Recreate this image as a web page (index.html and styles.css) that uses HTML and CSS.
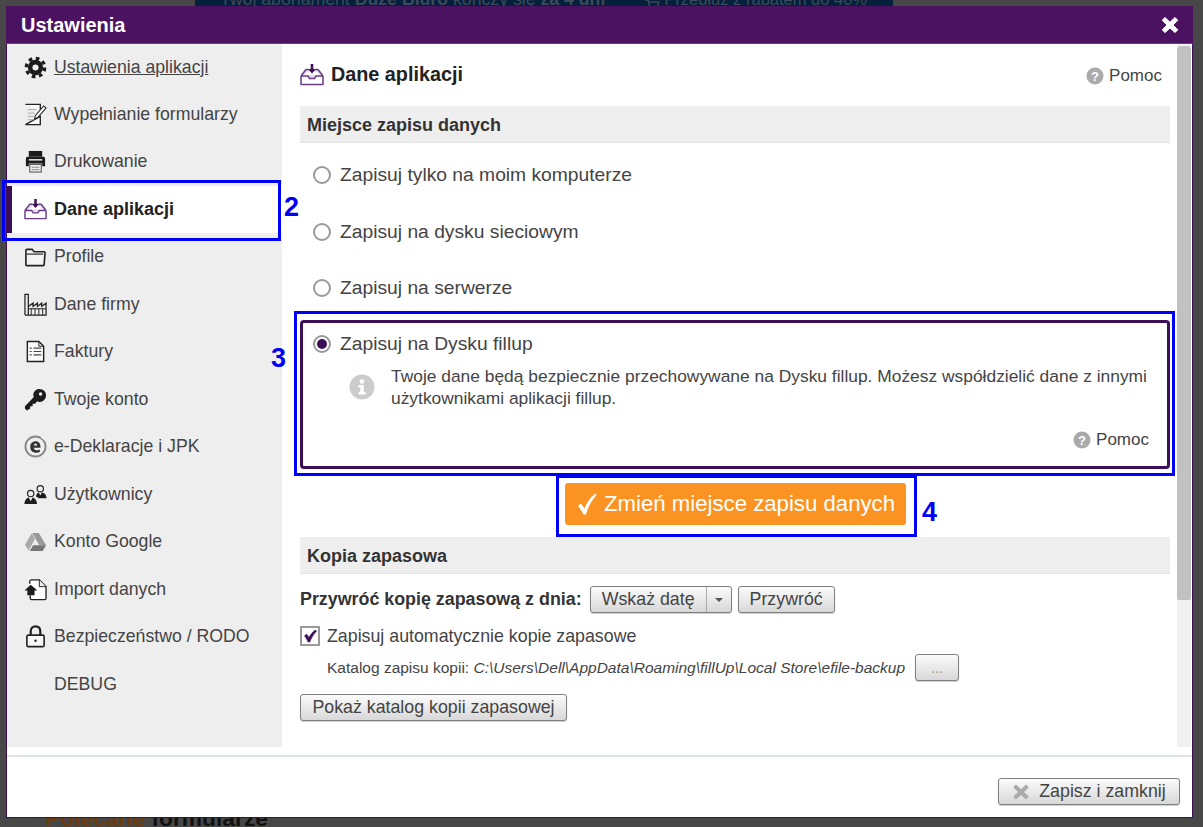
FILE: index.html
```html
<!DOCTYPE html>
<html lang="pl">
<head>
<meta charset="utf-8">
<title>Ustawienia</title>
<link rel="stylesheet" href="styles.css">
</head>
<body>
<div class="page">
  <div class="peek-top"><span>Twój abonament <strong>Duże Biuro</strong> kończy się <strong>za 4 dni</strong></span><svg class="peek-cart" viewBox="0 0 16 16"><path d="M1 2H4L6 10H13L15 4H5" fill="none" stroke="#3c4a5a" stroke-width="1.500"/><circle cx="7" cy="13" r="1.500" fill="#3c4a5a"/><circle cx="12" cy="13" r="1.500" fill="#3c4a5a"/></svg><span class="peek-link">Przedłuż z rabatem do 40%</span></div>
  <div class="peek-bottom"><span class="peek-orange">Polecane</span> formularze</div>

  <div class="dialog">
    <header class="titlebar">
      <h1 class="title">Ustawienia</h1>
      <svg class="close" viewBox="0 0 18 18"><path d="M4 1.5 9 6.2 14 1.5 16.8 4.3 12 9 16.8 13.8 14 16.6 9 11.9 4 16.6 1.2 13.8 6 9 1.2 4.3Z" fill="#fff" stroke="#fff" stroke-linejoin="round"/></svg>
    </header>

    <div class="main">
      <nav class="sidebar">
        <a class="nav-item first">
          <svg class="ico" viewBox="0 0 24 24"><circle cx="12" cy="12" r="8" fill="#1c1c1c"/><circle cx="12" cy="12" r="9.6" fill="none" stroke="#1c1c1c" stroke-width="3.4" stroke-dasharray="3.8 3.74"/><circle cx="12" cy="12" r="3.2" fill="#eee"/></svg>
          <span class="underlined">Ustawienia aplikacji</span>
        </a>
        <a class="nav-item">
          <svg class="ico" viewBox="0 0 24 24"><path d="M1.500 1.500H17V7M17 14V22.500H1.500Z" fill="#fff" stroke="#222" stroke-width="1.400"/><path d="M4 7H13M4 10.500H11M4 14H10M4 17.500H11" stroke="#aaa" stroke-width="1"/><path d="M11 16.500 12 13 20.500 3 23 5.200 14.500 15Z" fill="#fff" stroke="#222" stroke-width="1.100"/></svg>
          <span>Wypełnianie formularzy</span>
        </a>
        <a class="nav-item">
          <svg class="ico" viewBox="0 0 24 24"><path d="M5 1H19V7H5Z" fill="#1c1c1c"/><path d="M2 9C2 7.500 3 7 4 7H20C21 7 22 7.500 22 9V17H19V14H5V17H2Z" fill="#1c1c1c"/><rect x="6" y="15" width="12" height="8" fill="#eee" stroke="#444"/><path d="M8 18H16M8 20.500H16" stroke="#888"/><rect x="5" y="9.500" width="14" height="1.500" fill="#eee"/></svg>
          <span>Drukowanie</span>
        </a>
        <a class="nav-item active">
          <svg class="ico" viewBox="0 0 24 24"><path d="M1 12 6 6H9V9H7L4 12.500H8.500L10 15H14L15.500 12.500H20L17 9H15V6H18L23 12Z" fill="#e4d8ea"/><path d="M1 13V21.500H23V13M1 13 6 6.500H8.500M23 13 18 6.500H15.500M1 13H8L9.500 15.500H14.500L16 13H23" fill="none" stroke="#6a3d85" stroke-width="1.500" stroke-linejoin="round"/><path d="M10.700 1H13.300V6H16L12 10.500 8 6H10.700Z" fill="#3c0f56"/></svg>
          <span>Dane aplikacji</span>
        </a>
        <a class="nav-item">
          <svg class="ico" viewBox="0 0 24 24"><path d="M2 20.500V5.500C2 4.800 2.400 4.500 3 4.500H8.500L10.500 7H21C21.700 7 22 7.400 22 8L21 20.500C21 21.200 20.600 21.500 20 21.500H3C2.400 21.500 2 21.200 2 20.500Z" fill="#f4f4f4" stroke="#222" stroke-width="1.700"/><path d="M3 9.500H20" stroke="#222" stroke-width="1.200"/></svg>
          <span>Profile</span>
        </a>
        <a class="nav-item">
          <svg class="ico" viewBox="0 0 24 24"><path d="M1 23V1.500H4.500V23M4.500 14 9.500 10.500V14L14 10.500V14L18.500 10.500V14L23 10.500V23H1" fill="none" stroke="#222" stroke-width="1.300"/><path d="M7.500 16V23M11.500 16V23M15.500 16V23M19.500 16V23M5 16.500H23" stroke="#222" stroke-width="1"/></svg>
          <span>Dane firmy</span>
        </a>
        <a class="nav-item">
          <svg class="ico" viewBox="0 0 24 24"><path d="M3.500 1.500H15.500L20.500 6.500V22.500H3.500Z" fill="#fafafa" stroke="#222" stroke-width="1.500"/><path d="M15.500 1.500V6.500H20.500" fill="none" stroke="#222"/><path d="M6 8.500H8M6 12H8M6 15.500H8M10 8.500H18M10 12H18M10 15.500H18" stroke="#444" stroke-width="1.300"/></svg>
          <span>Faktury</span>
        </a>
        <a class="nav-item">
          <svg class="ico" viewBox="0 0 24 24"><path d="M16 1C20 1 23 4 23 7.500 23 11.500 20 14.500 16.500 14.500 15.300 14.500 14.500 14.200 13.800 13.900L11.500 16.500H9V19H6.500V21.500L3 23.500 1 21.500V19L10.300 9.500C10 8.800 9.700 8 9.700 7.200 9.700 3.800 12.500 1 16 1Z" fill="#1c1c1c"/><circle cx="17.300" cy="6.300" r="1.800" fill="#eee"/></svg>
          <span>Twoje konto</span>
        </a>
        <a class="nav-item">
          <svg class="ico" viewBox="0 0 24 24"><circle cx="12" cy="12" r="10.500" fill="none" stroke="#888" stroke-width="2"/><path d="M17 2H23V7" fill="#eee"/><path d="M6.500 12.500C6.500 8.800 9 6.500 12.200 6.500 15.500 6.500 17.500 9 17.200 13.200H10.200C10.500 15.300 12 16 13.500 16 14.800 16 15.700 15.700 16.500 15.200V17.700C15.500 18.300 14.300 18.500 13 18.500 9.200 18.500 6.500 16.300 6.500 12.500ZM10.200 11H13.800C13.700 9.600 13.100 8.900 12.100 8.900 11 8.900 10.400 9.700 10.200 11Z" fill="#333" fill-rule="evenodd"/></svg>
          <span>e-Deklaracje i JPK</span>
        </a>
        <a class="nav-item">
          <svg class="ico" viewBox="0 0 24 24"><circle cx="7" cy="11" r="3.300" fill="#eee" stroke="#222" stroke-width="1.200"/><path d="M0.500 22C0.500 17.500 3 15.500 5 15L7 19 9 15C11 15.500 13.500 17.500 13.500 22Z" fill="#1c1c1c"/><circle cx="17" cy="6" r="3.300" fill="#eee" stroke="#222" stroke-width="1.200"/><path d="M12.500 14C13 11.500 14 10.500 15.300 10L17 13 18.700 10C21 10.500 23.300 12 23.500 16H15.500C14.500 15 13.500 14.500 12.500 14Z" fill="#1c1c1c"/></svg>
          <span>Użytkownicy</span>
        </a>
        <a class="nav-item">
          <svg class="ico" viewBox="0 0 24 24"><path d="M8.500 3H15.500L23 16H16Z" fill="#999"/><path d="M8 3.500 11.500 9.500 4.800 21.500 1 15.500Z" fill="#aaa"/><path d="M9.500 16H23L19.500 22H6Z" fill="#777"/></svg>
          <span>Konto Google</span>
        </a>
        <a class="nav-item">
          <svg class="ico" viewBox="0 0 24 24"><path d="M6 6V4C6 3 6.500 2 7.500 2H16L23 9V21C23 22 22.500 22.500 21.500 22.500H8C7 22.500 6.500 22 6.500 21V18" fill="#fff" stroke="#222" stroke-width="1.400"/><path d="M16 2V9H23" fill="#eee" stroke="#222"/><path d="M7 7 14 13H11V18H3.500V13H0.500Z" fill="#1c1c1c"/></svg>
          <span>Import danych</span>
        </a>
        <a class="nav-item">
          <svg class="ico" viewBox="0 0 24 24"><path d="M7 11V7C7 3.500 9 1.500 12 1.500 15 1.500 17 3.500 17 7V11" fill="none" stroke="#222" stroke-width="2.300"/><rect x="3" y="10.500" width="18" height="12" rx="1.500" fill="#f7f7f7" stroke="#222" stroke-width="1.700"/><circle cx="12" cy="16.500" r="1.300" fill="#222"/></svg>
          <span>Bezpieczeństwo / RODO</span>
        </a>
        <a class="nav-item"><span class="ico"></span><span>DEBUG</span></a>
      </nav>

      <section class="content">
        <div class="heading-row">
          <svg class="heading-ico" viewBox="0 0 24 24"><path d="M1 12 6 6H9V9H7L4 12.500H8.500L10 15H14L15.500 12.500H20L17 9H15V6H18L23 12Z" fill="#e4d8ea"/><path d="M1 13V21.500H23V13M1 13 6 6.500H8.500M23 13 18 6.500H15.500M1 13H8L9.500 15.500H14.500L16 13H23" fill="none" stroke="#6a3d85" stroke-width="1.500" stroke-linejoin="round"/><path d="M10.700 1H13.300V6H16L12 10.500 8 6H10.700Z" fill="#3c0f56"/></svg>
          <h2 class="heading">Dane aplikacji</h2>
          <a class="help top-help">
            <svg class="help-ico" viewBox="0 0 18 18"><circle cx="9" cy="9" r="8.500" fill="#aaa"/><text x="9" y="13.500" class="help-q">?</text></svg>
            Pomoc
          </a>
        </div>

        <h3 class="section-title">Miejsce zapisu danych</h3>

        <label class="radio-row"><span class="radio"></span>Zapisuj tylko na moim komputerze</label>
        <label class="radio-row"><span class="radio"></span>Zapisuj na dysku sieciowym</label>
        <label class="radio-row"><span class="radio"></span>Zapisuj na serwerze</label>

        <div class="selected-box">
          <label class="radio-row inner"><span class="radio on"></span>Zapisuj na Dysku fillup</label>
          <div class="info">
            <svg class="info-ico" viewBox="0 0 26 26"><circle cx="13" cy="13" r="12.500" fill="#ccc"/><circle cx="13" cy="7.500" r="2.300" fill="#fff"/><path d="M9.500 11H14.800V18H16.500V20.500H9.500V18H11.300V13.500H9.500Z" fill="#fff"/></svg>
            <p class="info-text">Twoje dane będą bezpiecznie przechowywane na Dysku fillup. Możesz współdzielić dane z innymi użytkownikami aplikacji fillup.</p>
          </div>
          <a class="help box-help">
            <svg class="help-ico" viewBox="0 0 18 18"><circle cx="9" cy="9" r="8.500" fill="#aaa"/><text x="9" y="13.500" class="help-q">?</text></svg>
            Pomoc
          </a>
        </div>

        <div class="cta-row">
          <button class="cta"><svg class="cta-check" viewBox="0 0 20 22"><path d="M1 13 4 10.500 7.500 15.500C10 9.500 13.500 4 18.500 0.500L19.500 2C14.500 7.500 11 14 9 21.500H6.500C5 18.500 3.300 15.500 1 13Z" fill="#fff"/></svg>Zmień miejsce zapisu danych</button>
        </div>

        <h3 class="section-title">Kopia zapasowa</h3>

        <div class="restore-row">
          <b class="restore-label">Przywróć kopię zapasową z dnia:</b>
          <span class="btn select"><span class="select-label">Wskaż datę</span><span class="select-arrow"></span></span>
          <button class="btn restore">Przywróć</button>
        </div>

        <label class="check-row"><span class="checkbox"><svg viewBox="0 0 16 16"><path d="M2.500 8 4.500 6 7 9.500C8.500 6.500 10.500 4 13.500 2L14.500 3.200C11.500 6.200 9.300 9.800 7.800 14H6C5 11.500 4 9.500 2.500 8Z" fill="#3c0f56" stroke="#3c0f56" stroke-width=".6"/></svg></span>Zapisuj automatycznie kopie zapasowe</label>

        <div class="path-row">
          <span>Katalog zapisu kopii: <i>C:\Users\Dell\AppData\Roaming\fillUp\Local Store\efile-backup</i></span>
          <button class="btn dots">...</button>
        </div>

        <button class="btn show-dir">Pokaż katalog kopii zapasowej</button>
      </section>

      <div class="scrollbar"><div class="thumb"></div></div>
    </div>

    <footer class="footer">
      <button class="btn save"><svg class="save-ico" viewBox="0 0 18 18"><path d="M4 1.500 9 6.200 14 1.500 16.800 4.300 12 9 16.800 13.800 14 16.600 9 11.900 4 16.600 1.200 13.800 6 9 1.200 4.300Z" fill="#aaa"/></svg>Zapisz i zamknij</button>
    </footer>
  </div>

  <div class="mark mark-2"></div><span class="mark-num num-2">2</span>
  <div class="mark mark-3"></div><span class="mark-num num-3">3</span>
  <div class="mark mark-4"></div><span class="mark-num num-4">4</span>
</div>
</body>
</html>
```
FILE: styles.css
```css
* { box-sizing: border-box; }
html, body { margin: 0; padding: 0; }
body { font-family: "Liberation Sans", Arial, sans-serif; color: #444; }
.page { position: relative; width: 1203px; height: 827px; overflow: hidden; background: #474747; padding: 6px 10px 9px 6px; }

.peek-top { position: absolute; left: 195px; top: -10px; width: 698px; height: 16px; background: #04203c; color: #3c4a5a; font-size: 17.7px; line-height: 18px; padding-left: 25px; white-space: nowrap; overflow: hidden; display: flex; }
.peek-cart { width: 16px; height: 16px; margin: 8px 4px 0 39px; flex: none; }
.peek-link { text-decoration: underline; font-size: 16.5px; }
.peek-bottom { position: absolute; left: 45px; top: 805px; font-size: 22.8px; font-weight: 700; color: #111; white-space: nowrap; }
.peek-orange { color: #6b3c10; }

.dialog { position: relative; width: 1187px; height: 812px; background: #fff; border: 1px solid #3c0f56; border-top: 0; display: flex; flex-direction: column; }
.titlebar { height: 38px; margin: 0 -1px; flex: none; background: #4b1262; border-bottom: 1px solid #7b2ea0; display: flex; align-items: center; justify-content: space-between; padding: 1px 14px 0 15px; }
.title { margin: 0; font-size: 20px; font-weight: 700; color: #fff; }
.close { width: 18px; height: 18px; }

.main { height: 703px; flex: none; display: flex; margin-bottom: 8px; }
.sidebar { width: 275px; flex: none; background: #eee; }
.nav-item { height: 47.5px; display: flex; align-items: center; gap: 7px; padding-left: 17px; font-size: 17.7px; color: #444; }
.nav-item.first { height: 46.5px; }
.ico { width: 23px; height: 23px; flex: none; display: block; }
.underlined { text-decoration: underline; }
.nav-item.active { background: #fff; font-weight: 700; font-size: 18px; color: #222; border-left: 5px solid #3c0f56; padding-left: 12px; }

.content { flex: 1; padding: 0 7px 0 18px; min-width: 0; }
.heading-row { height: 62px; display: flex; align-items: center; }
.heading-ico { width: 24px; height: 24px; margin-right: 7px; }
.heading { margin: 0 0 2px; font-size: 19.8px; font-weight: 700; color: #222; flex: 1; }
.help { display: flex; align-items: center; gap: 5px; font-size: 17px; color: #444; padding-right: 8px; }
.top-help { margin-top: 1px; }
.help-ico { width: 18px; height: 18px; }
.help-q { font: 700 13px "Liberation Sans", sans-serif; fill: #fff; text-anchor: middle; }

.section-title { margin: 0; height: 37px; background: #eee; border-bottom: 1px solid #e4e4e4; font-size: 18px; font-weight: 700; color: #333; line-height: 38px; padding-left: 7px; }
.radio-row { display: flex; align-items: center; height: 56.4px; padding-left: 13px; font-size: 19.25px; color: #444; gap: 9px; }
.radio-row:first-of-type { margin-top: 4px; }
.radio { width: 18px; height: 18px; border-radius: 50%; border: 2px solid #999; background: #fff; flex: none; position: relative; }
.radio.on::after { content: ""; position: absolute; inset: 2px; border-radius: 50%; background: #3c0f56; }

.selected-box { height: 149px; margin-top: 4px; border: 3px solid #3c0f56; border-radius: 4px; display: flex; flex-direction: column; }
.radio-row.inner { height: 42px; padding-left: 10px; margin: 0; flex: none; }
.info { display: flex; align-items: center; padding-left: 46px; padding-right: 10px; }
.info-ico { width: 26px; height: 26px; flex: none; margin-right: 16px; }
.info-text { margin: 0; font-size: 17.4px; line-height: 22px; color: #444; }
.box-help { align-self: flex-end; margin-top: 21px; padding-right: 18px; }

.cta-row { display: flex; justify-content: center; padding-top: 14px; padding-bottom: 12px; }
.cta { height: 42px; width: 341px; border: 0; border-radius: 3px; background: #fb9323; color: #fff; font: 400 22.2px "Liberation Sans", sans-serif; display: flex; align-items: center; justify-content: center; gap: 7px; padding: 0 0 0 2px; }
.cta-check { width: 20px; height: 22px; }

.btn { display: inline-flex; align-items: center; justify-content: center; height: 27px; border: 1px solid #7e7e7e; border-radius: 3px; background: linear-gradient(#fbfbfb, #d8d8d8); color: #444; font: 400 17.8px "Liberation Sans", sans-serif; padding: 0; box-shadow: 0 1px 1px rgba(0,0,0,.2); }
.restore-row { display: flex; align-items: center; margin-top: 12px; }
.restore-label { font-size: 17.85px; color: #333; margin-right: 8px; white-space: nowrap; }
.select { width: 142px; justify-content: flex-start; }
.select-label { flex: 1; text-align: center; }
.select-arrow { width: 25px; height: 100%; border-left: 1px solid #aaa; position: relative; flex: none; }
.select-arrow::after { content: ""; position: absolute; left: 8px; top: 11px; border: 4px solid transparent; border-top-color: #555; }
.restore { width: 97px; margin-left: 6px; }
.check-row { display: flex; align-items: center; gap: 7px; margin-top: 12px; font-size: 17.8px; color: #444; height: 22px; }
.checkbox { width: 20px; height: 20px; border: 2px solid #999; background: #fff; flex: none; }
.checkbox svg { display: block; width: 16px; height: 16px; }
.path-row { display: flex; align-items: center; padding-left: 27px; margin-top: 7px; font-size: 15.5px; color: #444; height: 27px; gap: 10px; white-space: nowrap; }
.dots { width: 44px; color: #999; font-size: 14px; }
.show-dir { width: 267px; margin-top: 13px; }

.scrollbar { width: 14px; flex: none; background: #f1f1f1; margin-right: 1px; padding-top: 2px; }
.thumb { height: 554px; background: #c1c1c1; border-radius: 4px 4px 2px 2px; }

.footer { flex: 1; border-top: 2px solid #dde2e2; display: flex; justify-content: flex-end; align-items: flex-start; padding: 21px 12px 0 0; }
.save { width: 182px; gap: 9px; }
.save-ico { width: 18px; height: 18px; }

.mark { position: absolute; border: 3px solid #0000f5; pointer-events: none; }
.mark-2 { left: 2px; top: 180px; width: 279px; height: 61px; }
.mark-3 { left: 294px; top: 311px; width: 881px; height: 165px; }
.mark-4 { left: 556px; top: 475px; width: 361px; height: 62px; }
.mark-num { position: absolute; font-size: 27px; font-weight: 700; line-height: 30px; color: #0000f5; }
.num-2 { left: 284px; top: 192px; }
.num-3 { left: 271px; top: 343px; }
.num-4 { left: 922px; top: 497px; }
```
